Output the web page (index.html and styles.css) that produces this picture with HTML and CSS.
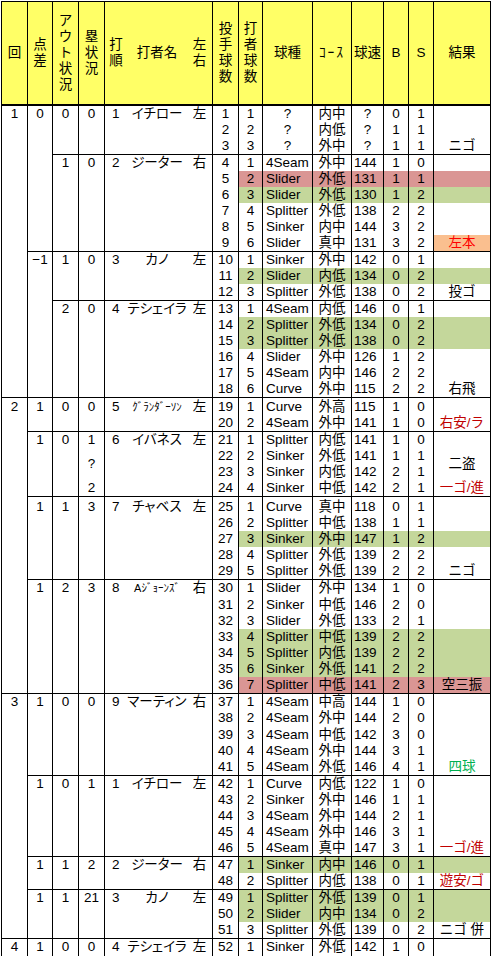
FILE: index.html
```html
<!DOCTYPE html>
<html lang="ja">
<head>
<meta charset="utf-8">
<title>投球記録</title>
<link rel="stylesheet" href="styles.css">
</head>
<body>
<table class="sheet">
<colgroup>
<col class="c-inn"><col class="c-diff"><col class="c-out"><col class="c-base">
<col class="c-ord"><col class="c-name"><col class="c-lr">
<col class="c-pn"><col class="c-bn"><col class="c-kind"><col class="c-course"><col class="c-speed"><col class="c-b"><col class="c-s"><col class="c-res">
</colgroup>
<thead>
<tr>
<th>回</th>
<th>点<br>差</th>
<th>ア<br>ウ<br>ト<br>状<br>況</th>
<th>塁<br>状<br>況</th>
<th class="o-h">打<br>順</th>
<th class="nm-h">打者名</th>
<th>左<br>右</th>
<th>投<br>手<br>球<br>数</th>
<th>打<br>者<br>球<br>数</th>
<th>球種</th>
<th class="course-h">ｺｰｽ</th>
<th>球速</th>
<th>B</th>
<th>S</th>
<th>結果</th>
</tr>
</thead>
<tbody>
<tr>
<td class="t" rowspan="18">1</td><td class="t" rowspan="9">0</td><td class="t" rowspan="3">0</td><td class="t" rowspan="3">0</td><td class="t o" rowspan="3">1</td><td class="t nm" rowspan="3">イチロー</td><td class="t lr" rowspan="3">左</td>
<td>1</td><td>1</td><td>?</td><td>内中</td><td>?</td><td>0</td><td>1</td><td></td></tr>
<tr><td>2</td><td>2</td><td>?</td><td>内低</td><td>?</td><td>1</td><td>1</td><td></td></tr>
<tr><td>3</td><td>3</td><td>?</td><td>外中</td><td>?</td><td>1</td><td>1</td><td>ニゴ</td></tr>
<tr class="s">
<td class="t" rowspan="6">1</td><td class="t" rowspan="6">0</td><td class="t o" rowspan="6">2</td><td class="t nm" rowspan="6">ジーター</td><td class="t lr" rowspan="6">右</td>
<td>4</td><td>1</td><td class="k">4Seam</td><td>外中</td><td class="v">144</td><td>1</td><td>0</td><td></td></tr>
<tr class="r"><td>5</td><td>2</td><td class="k">Slider</td><td>外低</td><td class="v">131</td><td>1</td><td>1</td><td></td></tr>
<tr class="g"><td>6</td><td>3</td><td class="k">Slider</td><td>外低</td><td class="v">130</td><td>1</td><td>2</td><td></td></tr>
<tr><td>7</td><td>4</td><td class="k">Splitter</td><td>外低</td><td class="v">138</td><td>2</td><td>2</td><td></td></tr>
<tr><td>8</td><td>5</td><td class="k">Sinker</td><td>内中</td><td class="v">144</td><td>3</td><td>2</td><td></td></tr>
<tr><td>9</td><td>6</td><td class="k">Slider</td><td>真中</td><td class="v">131</td><td>3</td><td>2</td><td class="hr">左本</td></tr>
<tr class="s">
<td class="t" rowspan="9">−1</td><td class="t" rowspan="3">1</td><td class="t" rowspan="3">0</td><td class="t o" rowspan="3">3</td><td class="t nm" rowspan="3">カノ</td><td class="t lr" rowspan="3">左</td>
<td>10</td><td>1</td><td class="k">Sinker</td><td>外中</td><td class="v">142</td><td>0</td><td>1</td><td></td></tr>
<tr class="g"><td>11</td><td>2</td><td class="k">Slider</td><td>内低</td><td class="v">134</td><td>0</td><td>2</td><td></td></tr>
<tr><td>12</td><td>3</td><td class="k">Splitter</td><td>外低</td><td class="v">138</td><td>0</td><td>2</td><td>投ゴ</td></tr>
<tr class="s">
<td class="t" rowspan="6">2</td><td class="t" rowspan="6">0</td><td class="t o" rowspan="6">4</td><td class="t nm" rowspan="6">テシェイラ</td><td class="t lr" rowspan="6">左</td>
<td>13</td><td>1</td><td class="k">4Seam</td><td>内低</td><td class="v">146</td><td>0</td><td>1</td><td></td></tr>
<tr class="g"><td>14</td><td>2</td><td class="k">Splitter</td><td>外低</td><td class="v">134</td><td>0</td><td>2</td><td></td></tr>
<tr class="g"><td>15</td><td>3</td><td class="k">Splitter</td><td>外低</td><td class="v">138</td><td>0</td><td>2</td><td></td></tr>
<tr><td>16</td><td>4</td><td class="k">Slider</td><td>外中</td><td class="v">126</td><td>1</td><td>2</td><td></td></tr>
<tr><td>17</td><td>5</td><td class="k">4Seam</td><td>内中</td><td class="v">146</td><td>2</td><td>2</td><td></td></tr>
<tr><td>18</td><td>6</td><td class="k">Curve</td><td>外中</td><td class="v">115</td><td>2</td><td>2</td><td>右飛</td></tr>
<tr class="s p1">
<td class="t" rowspan="18">2</td><td class="t" rowspan="2">1</td><td class="t" rowspan="2">0</td><td class="t" rowspan="2">0</td><td class="t o" rowspan="2">5</td><td class="t nm small" rowspan="2">ｸﾞﾗﾝﾀﾞｰｿﾝ</td><td class="t lr" rowspan="2">左</td>
<td>19</td><td>1</td><td class="k">Curve</td><td>外高</td><td class="v">115</td><td>1</td><td>0</td><td></td></tr>
<tr><td>20</td><td>2</td><td class="k">4Seam</td><td>外中</td><td class="v">141</td><td>1</td><td>0</td><td class="red">右安/ラ</td></tr>
<tr class="s">
<td class="t" rowspan="4">1</td><td class="t" rowspan="4">0</td><td>1</td><td class="t o" rowspan="4">6</td><td class="t nm" rowspan="4">イバネス</td><td class="t lr" rowspan="4">左</td>
<td>21</td><td>1</td><td class="k">Splitter</td><td>内低</td><td class="v">141</td><td>1</td><td>0</td><td></td></tr>
<tr><td rowspan="2">?</td><td>22</td><td>2</td><td class="k">Sinker</td><td>外低</td><td class="v">141</td><td>1</td><td>1</td><td rowspan="2">二盗</td></tr>
<tr><td>23</td><td>3</td><td class="k">Sinker</td><td>内低</td><td class="v">142</td><td>2</td><td>1</td></tr>
<tr><td>2</td><td>24</td><td>4</td><td class="k">Sinker</td><td>中低</td><td class="v">142</td><td>2</td><td>1</td><td class="red">一ゴ/進</td></tr>
<tr class="s p2">
<td class="t" rowspan="5">1</td><td class="t" rowspan="5">1</td><td class="t" rowspan="5">3</td><td class="t o" rowspan="5">7</td><td class="t nm" rowspan="5">チャベス</td><td class="t lr" rowspan="5">左</td>
<td>25</td><td>1</td><td class="k">Curve</td><td>真中</td><td class="v">118</td><td>0</td><td>1</td><td></td></tr>
<tr><td>26</td><td>2</td><td class="k">Splitter</td><td>中低</td><td class="v">138</td><td>1</td><td>1</td><td></td></tr>
<tr class="g"><td>27</td><td>3</td><td class="k">Sinker</td><td>外中</td><td class="v">147</td><td>1</td><td>2</td><td></td></tr>
<tr><td>28</td><td>4</td><td class="k">Splitter</td><td>外低</td><td class="v">139</td><td>2</td><td>2</td><td></td></tr>
<tr><td>29</td><td>5</td><td class="k">Splitter</td><td>外低</td><td class="v">139</td><td>2</td><td>2</td><td>ニゴ</td></tr>
<tr class="s">
<td class="t" rowspan="7">1</td><td class="t" rowspan="7">2</td><td class="t" rowspan="7">3</td><td class="t o" rowspan="7">8</td><td class="t nm small" rowspan="7">Aｼﾞｮｰﾝｽﾞ</td><td class="t lr" rowspan="7">右</td>
<td>30</td><td>1</td><td class="k">Slider</td><td>外中</td><td class="v">134</td><td>1</td><td>0</td><td></td></tr>
<tr class="p1"><td>31</td><td>2</td><td class="k">Sinker</td><td>中低</td><td class="v">146</td><td>2</td><td>0</td><td></td></tr>
<tr><td>32</td><td>3</td><td class="k">Slider</td><td>外低</td><td class="v">133</td><td>2</td><td>1</td><td></td></tr>
<tr class="g"><td>33</td><td>4</td><td class="k">Splitter</td><td>中低</td><td class="v">139</td><td>2</td><td>2</td><td></td></tr>
<tr class="g"><td>34</td><td>5</td><td class="k">Splitter</td><td>内低</td><td class="v">139</td><td>2</td><td>2</td><td></td></tr>
<tr class="g"><td>35</td><td>6</td><td class="k">Sinker</td><td>外低</td><td class="v">141</td><td>2</td><td>2</td><td></td></tr>
<tr class="r"><td>36</td><td>7</td><td class="k">Splitter</td><td>中低</td><td class="v">141</td><td>2</td><td>3</td><td>空三振</td></tr>
<tr class="s">
<td class="t" rowspan="15">3</td><td class="t" rowspan="5">1</td><td class="t" rowspan="5">0</td><td class="t" rowspan="5">0</td><td class="t o" rowspan="5">9</td><td class="t nm" rowspan="5">マーティン</td><td class="t lr" rowspan="5">右</td>
<td>37</td><td>1</td><td class="k">4Seam</td><td>中高</td><td class="v">144</td><td>1</td><td>0</td><td></td></tr>
<tr><td>38</td><td>2</td><td class="k">4Seam</td><td>外中</td><td class="v">144</td><td>2</td><td>0</td><td></td></tr>
<tr class="p1"><td>39</td><td>3</td><td class="k">4Seam</td><td>中低</td><td class="v">142</td><td>3</td><td>0</td><td></td></tr>
<tr><td>40</td><td>4</td><td class="k">4Seam</td><td>外中</td><td class="v">144</td><td>3</td><td>1</td><td></td></tr>
<tr><td>41</td><td>5</td><td class="k">4Seam</td><td>外低</td><td class="v">146</td><td>4</td><td>1</td><td class="grn">四球</td></tr>
<tr class="s">
<td class="t" rowspan="5">1</td><td class="t" rowspan="5">0</td><td class="t" rowspan="5">1</td><td class="t o" rowspan="5">1</td><td class="t nm" rowspan="5">イチロー</td><td class="t lr" rowspan="5">左</td>
<td>42</td><td>1</td><td class="k">Curve</td><td>内低</td><td class="v">122</td><td>1</td><td>0</td><td></td></tr>
<tr><td>43</td><td>2</td><td class="k">Sinker</td><td>外中</td><td class="v">146</td><td>1</td><td>1</td><td></td></tr>
<tr><td>44</td><td>3</td><td class="k">4Seam</td><td>外中</td><td class="v">144</td><td>2</td><td>1</td><td></td></tr>
<tr><td>45</td><td>4</td><td class="k">4Seam</td><td>外中</td><td class="v">146</td><td>3</td><td>1</td><td></td></tr>
<tr><td>46</td><td>5</td><td class="k">4Seam</td><td>真中</td><td class="v">147</td><td>3</td><td>1</td><td class="red">一ゴ/進</td></tr>
<tr class="s g">
<td class="t" rowspan="2">1</td><td class="t" rowspan="2">1</td><td class="t" rowspan="2">2</td><td class="t o" rowspan="2">2</td><td class="t nm" rowspan="2">ジーター</td><td class="t lr" rowspan="2">右</td>
<td>47</td><td>1</td><td class="k">Sinker</td><td>内中</td><td class="v">146</td><td>0</td><td>1</td><td></td></tr>
<tr><td>48</td><td>2</td><td class="k">Splitter</td><td>内低</td><td class="v">138</td><td>0</td><td>1</td><td class="red">遊安/ゴ</td></tr>
<tr class="s g">
<td class="t" rowspan="3">1</td><td class="t" rowspan="3">1</td><td class="t" rowspan="3">21</td><td class="t o" rowspan="3">3</td><td class="t nm" rowspan="3">カノ</td><td class="t lr" rowspan="3">左</td>
<td>49</td><td>1</td><td class="k">Splitter</td><td>外低</td><td class="v">139</td><td>0</td><td>1</td><td></td></tr>
<tr class="g"><td>50</td><td>2</td><td class="k">Slider</td><td>内中</td><td class="v">134</td><td>0</td><td>2</td><td></td></tr>
<tr><td>51</td><td>3</td><td class="k">Splitter</td><td>外低</td><td class="v">139</td><td>0</td><td>2</td><td>ニゴ 併</td></tr>
<tr class="s last">
<td class="t">4</td><td class="t">1</td><td class="t">0</td><td class="t">0</td><td class="t o">4</td><td class="t nm">テシェイラ</td><td class="t lr">左</td>
<td>52</td><td>1</td><td class="k">Sinker</td><td>外低</td><td class="v">142</td><td>1</td><td>0</td><td></td></tr>
</tbody>
</table>
</body>
</html>
```
FILE: styles.css
```css
html, body {
  margin: 0;
  background: #ffffff;
}
body {
  padding: 1px 0 0 1px;
  font-family: "Liberation Sans", "Noto Sans CJK JP", sans-serif;
  font-size: 13.5px;
  color: #000000;
  overflow: hidden;
}
.sheet {
  border-collapse: separate;
  border-spacing: 0;
  table-layout: fixed;
  width: 490px;
  border-top: 1px solid #000;
  border-left: 1px solid #000;
}
.c-inn { width: 26px; }
.c-diff { width: 25px; }
.c-out { width: 26px; }
.c-base { width: 26px; }
.c-ord { width: 22px; }
.c-name { width: 60px; }
.c-lr { width: 26px; }
.c-pn { width: 26px; }
.c-bn { width: 24px; }
.c-kind { width: 50px; }
.c-course { width: 39px; }
.c-speed { width: 32px; }
.c-b { width: 25px; }
.c-s { width: 25px; }
.c-res { width: 57px; }

th, td {
  padding: 0;
  border-right: 1px solid #000;
  line-height: 16px;
  text-align: center;
  vertical-align: middle;
  white-space: nowrap;
  font-weight: normal;
}
th {
  background: #ffff66;
  height: 102px;
  border-bottom: 2px solid #000;
}
th.o-h, th.nm-h,
td.o, td.nm {
  border-right: none;
}
th.course-h {
  letter-spacing: 2px;
}
tr.s > td {
  border-top: 1px solid #000;
}
tr.p1 > td {
  padding-top: 1px;
}
tr.p2 > td {
  padding-top: 2px;
}
td.t {
  vertical-align: top;
}
td.o {
  text-align: left;
  padding-left: 7px;
}
td.nm {
  font-feature-settings: "palt";
}
td.nm.small {
  font-size: 11px;
  line-height: 16px;
}
td.k {
  text-align: left;
  padding-left: 3px;
}
td.v {
  text-align: left;
  padding-left: 2px;
}
tr.g > td:nth-last-child(-n+7) {
  background: #c4d79b;
}
tr.r > td:nth-last-child(-n+7) {
  background: #da9694;
}
td.hr {
  background: #fabf8f;
  color: #ff0000;
}
td.red {
  color: #c00000;
}
td.grn {
  color: #00b050;
}
tr.last > td {
  padding-bottom: 12px;
  vertical-align: top;
}
```
